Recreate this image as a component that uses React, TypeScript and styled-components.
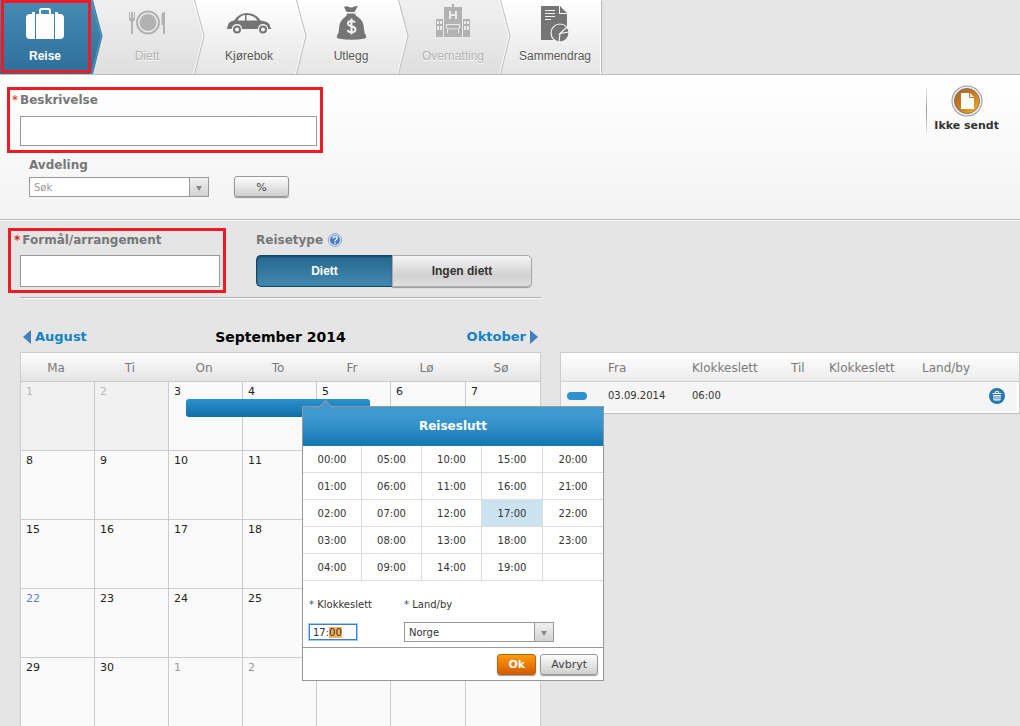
import React, { useEffect, useRef, useState } from "react";
import styled, { createGlobalStyle, css } from "styled-components";

const GlobalStyle = createGlobalStyle`
  *, *::before, *::after { box-sizing: border-box; }
  body {
    margin: 0;
    background: #e5e5e5;
    color: #333;
    font: 10px/16px "DejaVu Sans", sans-serif;
    overflow: hidden;
  }
  button, input, select { font-family: inherit; }
`;

const sans = `"Liberation Sans", Arial, sans-serif`;

/* ---------- Step navigation ---------- */

type Tone = "active" | "normal" | "muted";

const tones: Record<Tone, { from: string; to: string; text: string; icon: string; edge: string; glow: string }> = {
  active: { from: "#478bb3", to: "#2d6f9a", text: "#fff", icon: "#fff", edge: "#2f75a2", glow: "#4d9ac6" },
  normal: { from: "#ffffff", to: "#e5e5e5", text: "#555", icon: "#757575", edge: "#bdbdbd", glow: "#fff" },
  muted: { from: "#f0f0f0", to: "#dfdfdf", text: "#b2b2b2", icon: "#b2b2b2", edge: "#bdbdbd", glow: "#fff" },
};

const Steps = styled.ol`
  display: flex;
  margin: 0;
  padding: 0;
  list-style: none;
  height: 75px;
  background: #e6e6e6;
  border-bottom: 1px solid #bbb;
`;

const Step = styled.li<{ $tone: Tone }>`
  position: relative;
  width: 102px;
  padding-left: 12px;
  background: linear-gradient(${(p) => tones[p.$tone].from}, ${(p) => tones[p.$tone].to});
  &:first-child { width: 90px; padding-left: 0; }
  &:last-child { width: 103px; border-right: 1px solid #fff; box-shadow: 2px 0 1px -1px #bbb; }
`;

const StepButton = styled.button<{ $tone: Tone }>`
  display: flex;
  flex-direction: column;
  align-items: center;
  width: 90px;
  height: 74px;
  padding: 0;
  border: 0;
  background: none;
  white-space: nowrap;
  color: ${(p) => tones[p.$tone].text};
  font: ${(p) => (p.$tone === "active" ? "bold" : "normal")} 12px/16px ${sans};
  text-shadow: ${(p) => (p.$tone === "active" ? "none" : "0 1px 0 #fff")};
`;

const StepIcon = styled.svg<{ $tone: Tone }>`
  width: 48px;
  height: 48px;
  flex: none;
  color: ${(p) => tones[p.$tone].icon};
`;

const Arrow = styled.svg`
  position: absolute;
  top: 0;
  left: 100%;
  z-index: 1;
  width: 14px;
  height: 74px;
`;

const StepMark = styled.span`
  position: absolute;
  inset: 0 -1px 1px 1px;
  z-index: 2;
  border: 3px solid #ed1c24;
  pointer-events: none;
`;

const icons: Record<string, React.ReactNode> = {
  Reise: (
    <g fill="currentColor">
      <path d="M18 14V10.500q0-2.500 2.500-2.500h7q2.500 0 2.500 2.500V14h-2v-3q0-1-1-1h-6q-1 0-1 1v3z" />
      <path d="M11 12h3v2h-3zM34 12h3v2h-3z" />
      <path d="M9 14h5v25H9q-4 0-4-4V18q0-4 4-4zM15 14h18v25H15zM34 14h5q4 0 4 4v17q0 4-4 4h-5z" />
    </g>
  ),
  Diett: (
    <g fill="currentColor">
      <circle cx="25" cy="22.500" r="8.500" />
      <circle cx="25" cy="22.500" r="11" fill="none" stroke="currentColor" strokeWidth="2" />
      <path d="M6 12h1v6h1v-6h2v6h1v-6h1v7q0 2-2 2.500V33q0 1-1 1t-1-1V21.500Q6 21 6 19z" />
      <path d="M42 12v21q0 1-1 1t-1-1v-8h-1.500V15q0-3 3.500-3z" />
    </g>
  ),
  Kjørebok: (
    <g fill="currentColor">
      <path
        fillRule="evenodd"
        d="M2.500 29q-1-1 .3-3 .2-4.500 6.200-5.500 5-7.500 13-7.500 9 0 13.500 7.500 8.500 1 9.500 5v1.500q1.500.5 1 2H43.200q-.7-5-5.200-5t-5.200 5H17.200q-.7-5-5.200-5t-5.500 5zM12.500 20.500H20V15q-5 .5-7.500 5.500zM21.500 15v5.500h11q-3.500-5.500-11-5.500z"
      />
      <circle cx="12" cy="29.500" r="3" fill="none" stroke="currentColor" strokeWidth="2" />
      <circle cx="38" cy="29.500" r="3" fill="none" stroke="currentColor" strokeWidth="2" />
    </g>
  ),
  Utlegg: (
    <g fill="currentColor">
      <path d="M17 7q3-1.500 5 0 3 1 5-.5l4-.5-3.500 6h-8z" />
      <path d="M20 13.500h8q0 2 3 3.500 6 4 6 12 0 4 2 6.500 1 2-1 3-13 2.500-27 0-2-1-1-3 2-2.500 2-6.500 0-8 6-12 2-1.500 2-3.500z" />
      <path
        d="M28 22.500q-1-1.500-3.500-1.500-3.500 0-3.500 2.500 0 2 3.500 2.700 4 .8 4 3.300 0 2.700-4 2.700-3 0-4-2M24.500 18.500v16"
        fill="none"
        stroke="#f2f2f2"
        strokeWidth="2"
      />
    </g>
  ),
  Overnatting: (
    <g>
      <path fill="currentColor" d="M23 4h2v3h8v30H15V7h8zM7 19h7v18H7zM34 19h7v18h-7z" />
      <path fill="none" stroke="#ececec" strokeWidth="2" d="M21 11v8M27 11v8M21 15h6" />
      <path fill="#ececec" d="M8 21h2v3H8zM11 21h2v3h-2zM8 26h2v4H8zM11 26h2v4h-2zM35 21h2v3h-2zM38 21h2v3h-2zM35 26h2v4h-2zM38 26h2v4h-2z" />
      <path fill="none" stroke="#ececec" d="M17.500 24.500h13v4q-1.500 1.500-3 0-1.500 1.500-3.500 0-2 1.500-3.500 0-1.500 1.500-3 0zM18.500 33v-3.500M29.500 33v-3.500" />
    </g>
  ),
  Sammendrag: (
    <g>
      <path fill="currentColor" d="M10 6h18v8h8v26H10zM29 6l7 7h-7z" />
      <path stroke="#f2f2f2" strokeWidth="1" d="M14 10.500h10M14 13.500h10M14 16.500h10M14 19.500h6" />
      <circle cx="29" cy="33" r="9" fill="currentColor" stroke="#f4f4f4" strokeWidth="1.200" />
      <path fill="none" stroke="#f4f4f4" strokeWidth="1.200" d="M38 32l-9 1.500L36 27M29 33.500l-1 8.500" />
    </g>
  ),
};

const steps: { label: string; tone: Tone }[] = [
  { label: "Reise", tone: "active" },
  { label: "Diett", tone: "muted" },
  { label: "Kjørebok", tone: "normal" },
  { label: "Utlegg", tone: "normal" },
  { label: "Overnatting", tone: "muted" },
  { label: "Sammendrag", tone: "normal" },
];

function StepNav() {
  return (
    <nav>
      <Steps>
        {steps.map(({ label, tone }, i) => (
          <Step key={label} $tone={tone}>
            <StepButton type="button" $tone={tone}>
              <StepIcon $tone={tone} viewBox="0 0 48 48" aria-hidden="true">
                {icons[label]}
              </StepIcon>
              {label}
            </StepButton>
            {i < steps.length - 1 && (
              <Arrow viewBox="0 0 14 74" aria-hidden="true">
                <defs>
                  <linearGradient id={`step-${i}`} x1="0" y1="0" x2="0" y2="1">
                    <stop offset="0" stopColor={tones[tone].from} />
                    <stop offset="1" stopColor={tones[tone].to} />
                  </linearGradient>
                </defs>
                <path d="M0 0h2l9.500 36L2 74H0z" fill={`url(#step-${i})`} />
                <path d="M1.500 0l9.500 36L1.500 74" fill="none" stroke={tones[tone].glow} />
                <path d="M2.500 0l9.500 36L2.500 74" fill="none" stroke={tones[tone].edge} />
              </Arrow>
            )}
            {i === 0 && <StepMark />}
          </Step>
        ))}
      </Steps>
    </nav>
  );
}

/* ---------- Form parts ---------- */

const Label = styled.label`
  display: flex;
  align-items: center;
  gap: 2px;
  height: 16px;
  color: #777;
  font: bold 12px/16px "DejaVu Sans", sans-serif;
`;

const Star = styled.span<{ $strong?: boolean }>`
  margin-left: ${(p) => (p.$strong ? 2 : 0)}px;
  color: #d22;
  font-weight: ${(p) => (p.$strong ? "bold" : "normal")};
`;

const Marked = styled.div<{ $compact?: boolean }>`
  display: flex;
  flex-direction: column;
  gap: ${(p) => (p.$compact ? 7 : 8)}px;
  width: ${(p) => (p.$compact ? 218 : 316)}px;
  margin-left: ${(p) => (p.$compact ? 8 : 7)}px;
  padding: ${(p) => (p.$compact ? "1px 3px 3px 1px" : "2px 3px 4px 2px")};
  border: 3px solid #ed1c24;
`;

const TextInput = styled.input<{ $tall?: boolean }>`
  height: ${(p) => (p.$tall ? 32 : 30)}px;
  margin-left: 8px;
  padding: 0 6px;
  border: 1px solid #999;
  background: #fff;
  font-size: 12px;
  outline: 0;
`;

const SelectBox = styled.div<{ $width: number }>`
  position: relative;
  width: ${(p) => p.$width}px;
  &::before {
    content: "";
    position: absolute;
    inset: 1px 1px 1px auto;
    width: 19px;
    border-left: 1px solid #999;
    background: linear-gradient(#f0f0f0, #d2d2d2);
    pointer-events: none;
  }
  &::after {
    content: "";
    position: absolute;
    top: 9px;
    right: 7px;
    border: 3px solid transparent;
    border-top: 5px solid #888;
    border-bottom: 0;
    pointer-events: none;
  }
`;

const Select = styled.select<{ $hint?: boolean }>`
  display: block;
  appearance: none;
  width: 100%;
  height: 20px;
  padding: 0 22px 0 4px;
  border: 1px solid #999;
  border-radius: 0;
  background: #fff;
  color: ${(p) => (p.$hint ? "#999" : "#333")};
  font-size: 10px;
`;

const Button = styled.button<{ $primary?: boolean }>`
  height: 21px;
  min-width: 39px;
  padding: 1px 10px 0;
  border: 1px solid #999;
  border-radius: 3px;
  background: linear-gradient(#fdfdfd, #cfcfcf);
  box-shadow: 0 1px 1px rgba(0, 0, 0, 0.4);
  color: #444;
  font-size: 11px;
  line-height: 16px;
  ${(p) =>
    p.$primary &&
    css`
      border-color: #b5651a;
      background: linear-gradient(#ff9a0c, #d35c00);
      color: #fff;
      font-weight: bold;
    `}
`;

const PercentButton = styled(Button)`
  width: 55px;
  padding-top: 2px;
`;

/* ---------- Description section ---------- */

const Intro = styled.section`
  display: flex;
  justify-content: space-between;
  align-items: flex-start;
  padding: 12px 15px 22px 0;
  border-bottom: 1px solid #bbb;
  background: linear-gradient(#fff, #f3f3f3);
  box-shadow: 0 1px 0 #fff;
`;

const Department = styled.div`
  display: flex;
  align-items: flex-end;
  gap: 25px;
  padding: 4px 0 0 29px;
`;

const Field = styled.div`
  display: flex;
  flex-direction: column;
  gap: 4px;
`;

const Status = styled.div`
  display: flex;
  flex-direction: column;
  align-items: center;
  gap: 1px;
  margin-top: 1px;
  padding: 0 6px 0 7px;
  border-left: 1px solid;
  border-image: linear-gradient(#eee, #999, #eee) 1;
  color: #333;
  font: bold 11px/16px "DejaVu Sans", sans-serif;
`;

const StatusIcon = styled.svg`
  margin-top: -3px;
  width: 32px;
  height: 32px;
`;

/* ---------- Purpose section ---------- */

const Purpose = styled.section`
  display: flex;
  gap: 30px;
  margin-top: 8px;
`;

const TripType = styled.div`
  display: flex;
  flex-direction: column;
  gap: 7px;
  padding-top: 4px;
`;

const HelpButton = styled.button`
  display: block;
  width: 14px;
  height: 14px;
  margin-left: 3px;
  padding: 0;
  border: 0;
  background: none;
`;

const HelpIcon = styled.svg`
  display: block;
  width: 14px;
  height: 14px;
`;

const Toggle = styled.div`
  display: grid;
  grid-template-columns: 136px 140px;
`;

const ToggleButton = styled.button<{ $on?: boolean }>`
  height: 32px;
  padding: 0;
  font: bold 12px/16px ${sans};
  ${(p) =>
    p.$on
      ? css`
          border: 1px solid #0f4766;
          border-right: 0;
          border-radius: 5px 0 0 5px;
          background: linear-gradient(#26688f, #4388af);
          box-shadow: inset 0 1px 2px #12496a;
          color: #fff;
        `
      : css`
          border: 1px solid #aaa;
          border-radius: 0 5px 5px 0;
          background: linear-gradient(#f4f4f4, #d2d2d2 65%, #dedede);
          box-shadow: 0 1px 1px #999;
          color: #333;
        `}
`;

const Rule = styled.hr`
  width: 521px;
  height: 2px;
  margin: 4px 0 0 20px;
  border: 0;
  border-top: 1px solid #aaa;
  background: #fff;
`;

/* ---------- Calendar ---------- */

const Content = styled.main`
  display: grid;
  grid-template-columns: 521px minmax(0, 1fr);
  gap: 19px;
  align-items: start;
  padding-left: 20px;
`;

const CalendarBox = styled.section`
  position: relative;
`;

const MonthBar = styled.header`
  display: grid;
  grid-template-columns: 1fr auto 1fr;
  align-items: center;
  padding: 28px 3px 5px;
`;

const MonthTitle = styled.h2`
  margin: 0;
  color: #000;
  font: bold 14px/20px "DejaVu Sans", sans-serif;
`;

const MonthLink = styled.a<{ $end?: boolean }>`
  display: flex;
  align-items: center;
  justify-self: ${(p) => (p.$end ? "end" : "start")};
  gap: 4px;
  color: #1383c6;
  font: bold 13px/20px "DejaVu Sans", sans-serif;
  text-decoration: none;
`;

const MonthArrow = styled.svg`
  width: 8px;
  height: 14px;
  fill: #3f80bd;
`;

const CalendarTable = styled.table`
  width: 100%;
  table-layout: fixed;
  border: 1px solid #ccc;
  border-width: 1px 0 0 1px;
  border-collapse: separate;
  border-spacing: 0;
`;

const WeekDay = styled.th`
  width: 74px;
  height: 29px;
  padding: 2px 4px 0 0;
  border-bottom: 1px solid #ccc;
  background: linear-gradient(#fdfdfd, #e4e4e4);
  color: #7a7a7a;
  font: 12px/16px "DejaVu Sans", sans-serif;
  &:nth-child(n + 6) { width: 75px; }
  &:last-child { border-right: 1px solid #ccc; }
`;

type DayKind = "past" | "next" | "today" | "plain";
const dayColors: Record<DayKind, string> = { past: "#bbb", next: "#999", today: "#5b83c4", plain: "#222" };

const Day = styled.td<{ $kind: DayKind }>`
  position: relative;
  height: 69px;
  padding: 2px 5px;
  border: 1px solid #ccc;
  border-width: 0 1px 1px 0;
  background: ${(p) => (p.$kind === "past" ? "#f1f1f1" : "#fafafa")};
  color: ${(p) => dayColors[p.$kind]};
  font: 11px/16px "DejaVu Sans", sans-serif;
  vertical-align: top;
`;

const TripBar = styled.div`
  position: absolute;
  top: 17px;
  left: 17px;
  z-index: 1;
  width: 184px;
  height: 18px;
  border-radius: 3px;
  background: linear-gradient(#2b92ce, #126da7);
`;

/* ---------- Time picker dialog ---------- */

const Picker = styled.div`
  position: absolute;
  top: 107px;
  left: 282px;
  z-index: 2;
  width: 302px;
  border: 1px solid #999;
  background: #fff;
`;

const PickerTip = styled.svg`
  position: absolute;
  top: -7px;
  left: 15px;
  width: 16px;
  height: 8px;
`;

const PickerTitle = styled.h3`
  margin: 0;
  height: 39px;
  background: linear-gradient(#3d9ad1 20%, #3390c8 50%, #187ab4 90%);
  color: #fff;
  font: bold 12px/39px "DejaVu Sans", sans-serif;
  text-align: center;
`;

const HourTable = styled.table`
  width: 100%;
  table-layout: fixed;
  border-collapse: separate;
  border-spacing: 0;
`;

const Hour = styled.td<{ $on?: boolean }>`
  width: 60px;
  height: 27px;
  padding: 0;
  border: 1px solid #ddd;
  border-width: 0 1px 1px 0;
  background: ${(p) => (p.$on ? "#cbe3f1" : "#fff")};
  &:first-child { width: 59px; }
  &:nth-child(4) { width: 61px; }
  &:last-child { border-right: 0; }
`;

const HourButton = styled.button`
  display: block;
  width: 100%;
  height: 26px;
  padding: 2px 0 0;
  border: 0;
  background: none;
  color: #333;
  font-size: 10px;
  line-height: 16px;
`;

const PickerFields = styled.div`
  display: grid;
  grid-template-columns: 95px 150px;
  row-gap: 9px;
  align-items: center;
  padding: 16px 6px 5px;
`;

const SmallLabel = styled.label`
  color: #333;
  font-size: 10px;
  line-height: 16px;
`;

const SmallStar = styled.span`
  color: #357;
`;

const TimeInput = styled.input`
  width: 48px;
  height: 16px;
  padding: 0 3px;
  border: 1px solid #3b7fd4;
  background: #fff;
  box-shadow: 0 0 0 1px #a5c8f0;
  color: #333;
  font-size: 10px;
  outline: 0;
  &::selection { background: #fbb258; color: #333; }
`;

const PickerFooter = styled.footer`
  display: flex;
  justify-content: flex-end;
  gap: 4px;
  padding: 6px 5px 5px;
  border-top: 1px solid #999;
`;

function TimePicker() {
  const [time, setTime] = useState("17:00");
  const input = useRef<HTMLInputElement>(null);

  useEffect(() => {
    input.current?.focus({ preventScroll: true });
    input.current?.setSelectionRange(3, 5);
  }, []);

  const columns = [0, 5, 10, 15, 20];
  return (
    <Picker role="dialog" aria-labelledby="picker-title">
      <PickerTitle id="picker-title">Reiseslutt</PickerTitle>
      <PickerTip viewBox="0 0 16 8" aria-hidden="true">
        <path d="M0 8L7.500 .5 15 8" fill="#4a94cc" stroke="#999" />
      </PickerTip>
      <HourTable>
        <tbody>
          {[0, 1, 2, 3, 4].map((row) => (
            <tr key={row}>
              {columns.map((start) => {
                const hour = start + row;
                const text = `${String(hour).padStart(2, "0")}:00`;
                return (
                  <Hour key={start} $on={text === time}>
                    {hour < 24 && (
                      <HourButton type="button" onClick={() => setTime(text)}>
                        {text}
                      </HourButton>
                    )}
                  </Hour>
                );
              })}
            </tr>
          ))}
        </tbody>
      </HourTable>
      <PickerFields>
        <SmallLabel htmlFor="end-time">
          <SmallStar>*</SmallStar> Klokkeslett
        </SmallLabel>
        <SmallLabel htmlFor="country">
          <SmallStar>*</SmallStar> Land/by
        </SmallLabel>
        <TimeInput id="end-time" ref={input} value={time} onChange={(e) => setTime(e.target.value)} />
        <SelectBox $width={150}>
          <Select id="country">
            <option>Norge</option>
          </Select>
        </SelectBox>
      </PickerFields>
      <PickerFooter>
        <Button type="button" $primary>
          Ok
        </Button>
        <Button type="button">Avbryt</Button>
      </PickerFooter>
    </Picker>
  );
}

const weekDays = ["Ma", "Ti", "On", "To", "Fr", "Lø", "Sø"];

function dayKind(n: number): DayKind {
  if (n < 3) return "past";
  if (n > 30) return "next";
  return n === 22 ? "today" : "plain";
}

function Calendar() {
  return (
    <CalendarBox>
      <MonthBar>
        <MonthLink href="#august">
          <MonthArrow viewBox="0 0 8 14" aria-hidden="true">
            <path d="M8 0v14L0 7z" />
          </MonthArrow>
          August
        </MonthLink>
        <MonthTitle>September 2014</MonthTitle>
        <MonthLink href="#oktober" $end>
          Oktober
          <MonthArrow viewBox="0 0 8 14" aria-hidden="true">
            <path d="M0 0v14l8-7z" />
          </MonthArrow>
        </MonthLink>
      </MonthBar>
      <CalendarTable>
        <thead>
          <tr>
            {weekDays.map((d) => (
              <WeekDay key={d} scope="col">
                {d}
              </WeekDay>
            ))}
          </tr>
        </thead>
        <tbody>
          {[0, 1, 2, 3, 4].map((week) => (
            <tr key={week}>
              {weekDays.map((d, i) => {
                const n = week * 7 + i + 1;
                return (
                  <Day key={d} $kind={dayKind(n)}>
                    {n > 30 ? n - 30 : n}
                    {n === 3 && <TripBar />}
                  </Day>
                );
              })}
            </tr>
          ))}
        </tbody>
      </CalendarTable>
      <TimePicker />
    </CalendarBox>
  );
}

/* ---------- Trip list ---------- */

const TripTable = styled.table`
  width: 100%;
  margin-top: 53px;
  table-layout: fixed;
  border: 1px solid #ccc;
  border-bottom-color: #bbb;
  border-collapse: separate;
  border-spacing: 0;
  background: #fff;
`;

const TripHead = styled.th<{ $width?: number }>`
  width: ${(p) => (p.$width ? `${p.$width}px` : "auto")};
  height: 29px;
  padding: 2px 0 0;
  border-bottom: 1px solid #ccc;
  background: linear-gradient(#fff, #ececec);
  color: #7a7a7a;
  font: 12px/16px "DejaVu Sans", sans-serif;
  text-align: left;
`;

const TripCell = styled.td`
  height: 31px;
  padding: 0 0 3px;
  border: solid #fff;
  border-width: 1px 0;
  background: #f5f5f5;
  color: #333;
  font-size: 10px;
  line-height: 16px;
  &:last-child { border-right-width: 2px; }
`;

const TripMarker = styled.span`
  display: block;
  width: 20px;
  height: 8px;
  margin-left: 6px;
  border-radius: 4px;
  background: #2b92ce;
`;

const DeleteButton = styled.button`
  display: block;
  width: 16px;
  height: 16px;
  margin-left: auto;
  margin-right: 12px;
  padding: 0;
  border: 0;
  background: none;
`;

const DeleteIcon = styled.svg`
  display: block;
  width: 16px;
  height: 16px;
`;

function TripList() {
  return (
    <TripTable>
      <thead>
        <tr>
          <TripHead $width={47} />
          <TripHead $width={84} scope="col">Fra</TripHead>
          <TripHead $width={99} scope="col">Klokkeslett</TripHead>
          <TripHead $width={38} scope="col">Til</TripHead>
          <TripHead $width={93} scope="col">Klokkeslett</TripHead>
          <TripHead scope="col">Land/by</TripHead>
          <TripHead $width={40} />
        </tr>
      </thead>
      <tbody>
        <tr>
          <TripCell><TripMarker /></TripCell>
          <TripCell>03.09.2014</TripCell>
          <TripCell>06:00</TripCell>
          <TripCell />
          <TripCell />
          <TripCell />
          <TripCell>
            <DeleteButton type="button" aria-label="Slett">
              <DeleteIcon viewBox="0 0 16 16" aria-hidden="true">
                <circle cx="8" cy="8" r="8" fill="#2579ad" />
                <path
                  d="M3.500 5.500h9M6.500 5V3.500h3V5M4.500 7.500h7M5 7v5h6V7M7 8v4M9 8v4"
                  fill="none"
                  stroke="#fff"
                />
              </DeleteIcon>
            </DeleteButton>
          </TripCell>
        </tr>
      </tbody>
    </TripTable>
  );
}

/* ---------- Page ---------- */

export default function App() {
  return (
    <>
      <GlobalStyle />
      <StepNav />
      <Intro>
        <div>
          <Marked>
            <Label htmlFor="description">
              <Star>*</Star>Beskrivelse
            </Label>
            <TextInput id="description" />
          </Marked>
          <Department>
            <Field>
              <Label htmlFor="department">Avdeling</Label>
              <SelectBox $width={180}>
                <Select id="department" $hint>
                  <option>Søk</option>
                </Select>
              </SelectBox>
            </Field>
            <PercentButton type="button">%</PercentButton>
          </Department>
        </div>
        <Status>
          <StatusIcon viewBox="0 0 32 32" aria-hidden="true">
            <defs>
              <linearGradient id="status-fill" x1="0" y1="0" x2="1" y2="1">
                <stop offset="0" stopColor="#a8602c" />
                <stop offset="0.500" stopColor="#c97a22" />
                <stop offset="1" stopColor="#fdbb1c" />
              </linearGradient>
            </defs>
            <circle cx="16" cy="16" r="15.500" fill="#999" />
            <circle cx="16" cy="16" r="14.500" fill="#eee" />
            <circle cx="16" cy="16" r="12.500" fill="url(#status-fill)" stroke="#8a7560" />
            <path d="M10 8h8v5h5v11H10zM19 8l4 4h-4z" fill="#fff" />
          </StatusIcon>
          Ikke sendt
        </Status>
      </Intro>
      <Purpose>
        <Marked $compact>
          <Label htmlFor="purpose">
            <Star $strong>*</Star>Formål/arrangement
          </Label>
          <TextInput id="purpose" $tall />
        </Marked>
        <TripType>
          <Label as="div">
            Reisetype
            <HelpButton type="button" aria-label="Hjelp">
              <HelpIcon viewBox="0 0 14 14" aria-hidden="true">
                <circle cx="7" cy="7" r="6.500" fill="#e3eefb" stroke="#7fa3d6" />
                <circle cx="7" cy="7" r="5" fill="#4a7dc4" />
                <path d="M5 5.500q0-2 2-2t2 1.700q0 1-1 1.600T7 8.500M7 9.500V11" fill="none" stroke="#fff" strokeWidth="1.300" />
              </HelpIcon>
            </HelpButton>
          </Label>
          <Toggle>
            <ToggleButton type="button" $on aria-pressed="true">
              Diett
            </ToggleButton>
            <ToggleButton type="button" aria-pressed="false">
              Ingen diett
            </ToggleButton>
          </Toggle>
        </TripType>
      </Purpose>
      <Rule />
      <Content>
        <Calendar />
        <TripList />
      </Content>
    </>
  );
}
